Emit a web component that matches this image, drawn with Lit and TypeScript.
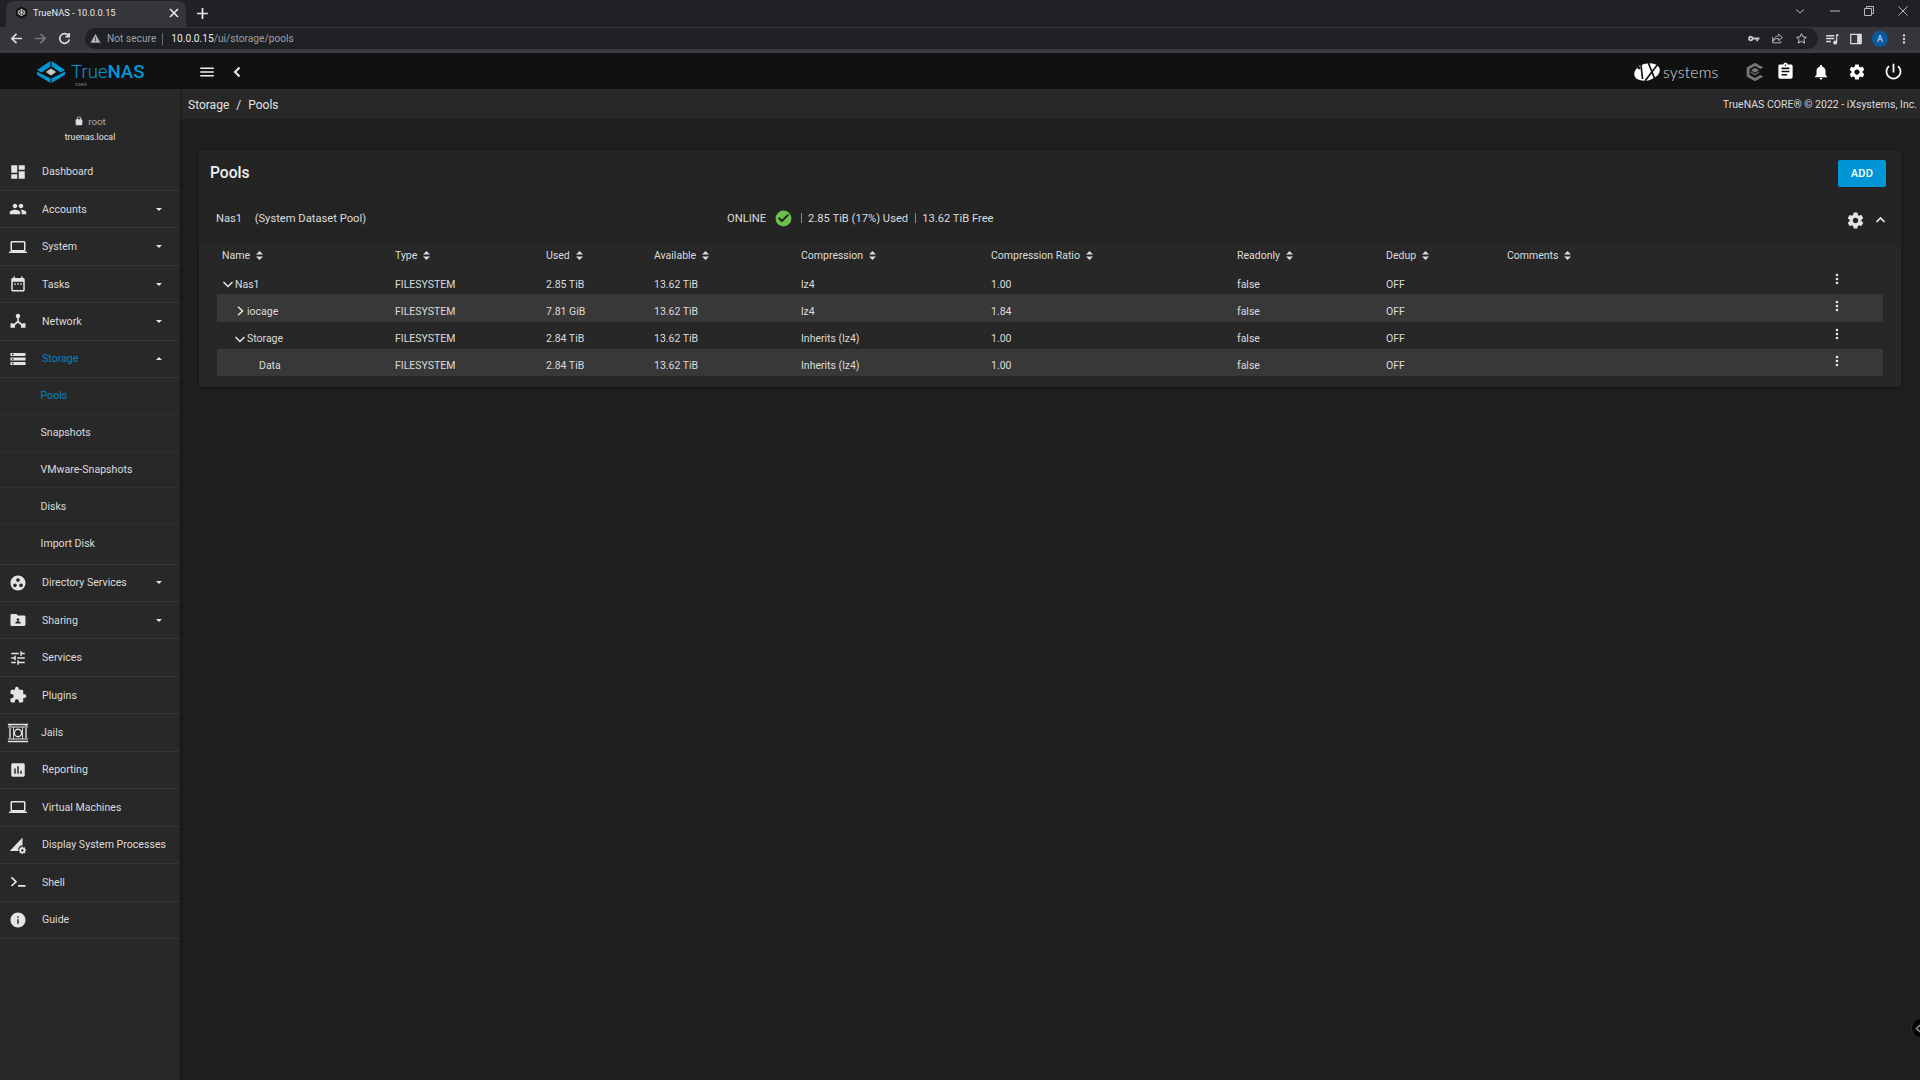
import { LitElement, html, css, svg } from "lit";
import { customElement } from "lit/decorators.js";

const P: Record<string, string> = {
  dashboard: "M3 13h8V3H3v10zm0 8h8v-6H3v6zm10 0h8V11h-8v10zm0-18v6h8V3h-8z",
  people: "M16 11c1.66 0 2.99-1.34 2.99-3S17.66 5 16 5c-1.66 0-3 1.34-3 3s1.34 3 3 3zm-8 0c1.66 0 2.99-1.34 2.99-3S9.66 5 8 5C6.34 5 5 6.34 5 8s1.34 3 3 3zm0 2c-2.33 0-7 1.17-7 3.5V19h14v-2.5c0-2.33-4.67-3.5-7-3.5zm8 0c-.29 0-.62.02-.97.05 1.16.84 1.97 1.97 1.97 3.45V19h6v-2.5c0-2.33-4.67-3.5-7-3.5z",
  laptop: "M20 18c1.1 0 1.99-.9 1.99-2L22 6c0-1.1-.9-2-2-2H4c-1.1 0-2 .9-2 2v10c0 1.1.9 2 2 2H0v2h24v-2h-4zM4 6h16v10H4V6z",
  calendar: "M9 11H7v2h2v-2zm4 0h-2v2h2v-2zm4 0h-2v2h2v-2zm2-7h-1V2h-2v2H8V2H6v2H5c-1.11 0-1.99.9-1.99 2L3 20c0 1.1.89 2 2 2h14c1.1 0 2-.9 2-2V6c0-1.1-.9-2-2-2zm0 16H5V9h14v11z",
  network: "M12 2.500a3 3 0 0 1 1 5.830V12l5 4.200V15h4v6h-6v-3.400l-4-3.300-4 3.300V21H2v-6h4v1.200L11 12V8.330A3 3 0 0 1 12 2.500z",
  storage: "M2 20h20v-4H2v4zm2-3h2v2H4v-2zM2 4v4h20V4H2zm4 3H4V5h2v2zm-4 7h20v-4H2v4zm2-3h2v2H4v-2z",
  group: "M12 2C6.48 2 2 6.48 2 12s4.48 10 10 10 10-4.48 10-10S17.52 2 12 2zM8 17.5c-1.38 0-2.5-1.12-2.5-2.5s1.12-2.5 2.5-2.5 2.5 1.12 2.5 2.5-1.12 2.5-2.5 2.5zM9.5 8c0-1.38 1.12-2.5 2.5-2.5s2.5 1.12 2.5 2.5-1.12 2.5-2.5 2.5S9.5 9.38 9.5 8zm6.5 9.5c-1.38 0-2.5-1.12-2.5-2.5s1.12-2.5 2.5-2.5 2.5 1.12 2.5 2.5-1.12 2.5-2.5 2.5z",
  sharing: "M20 6h-8l-2-2H4c-1.1 0-2 .9-2 2v12c0 1.1.9 2 2 2h16c1.1 0 2-.9 2-2V8c0-1.1-.9-2-2-2zM12 9.500c1 0 1.800.8 1.800 1.800s-.8 1.800-1.800 1.800-1.800-.8-1.800-1.800.8-1.800 1.800-1.800zm3.500 7h-7v-.9c0-1.200 2.300-1.800 3.500-1.800s3.500.6 3.500 1.800v.9z",
  tune: "M3 17v2h6v-2H3zM3 5v2h10V5H3zm10 16v-2h8v-2h-8v-2h-2v6h2zM7 9v2H3v2h4v2h2V9H7zm14 4v-2H11v2h10zm-6-4h2V7h4V5h-4V3h-2v6z",
  plugin: "M20.5 11H19V7c0-1.1-.9-2-2-2h-4V3.5C13 2.12 11.88 1 10.5 1S8 2.12 8 3.5V5H4c-1.1 0-1.99.9-1.99 2v3.8H3.5c1.49 0 2.7 1.21 2.7 2.7s-1.21 2.7-2.7 2.7H2V20c0 1.1.9 2 2 2h3.8v-1.5c0-1.49 1.21-2.7 2.7-2.7 1.49 0 2.7 1.21 2.7 2.7V22H17c1.1 0 2-.9 2-2v-4h1.5c1.38 0 2.5-1.12 2.5-2.5S21.88 11 20.5 11z",
  jail: "M1 2h22v1.500H1zM1 20.500h22V22H1zM1 5h22v1H1zM1 18h22v1H1zM2.500 3.500H4v15H2.500zM20 3.500h1.500v15H20zM6.500 6h1v12h-1zM16.500 6h1v12h-1zM12 7.200a4.800 4.800 0 1 1 0 9.600 4.800 4.800 0 0 1 0-9.600zm0 1.600a3.200 3.200 0 1 0 0 6.400 3.200 3.200 0 0 0 0-6.400z",
  report: "M19 3H5c-1.1 0-2 .9-2 2v14c0 1.1.9 2 2 2h14c1.1 0 2-.9 2-2V5c0-1.1-.9-2-2-2zM9 17H7v-7h2v7zm4 0h-2V7h2v10zm4 0h-2v-4h2v4z",
  process: "M1 20 18 2v10.200a6 6 0 0 0-5.600 7.800zM18.500 14l.3 1.300.8.4 1.200-.6 1 1-.6 1.200.4.8 1.300.3v1.400l-1.300.3-.4.8.6 1.200-1 1-1.200-.6-.8.4-.3 1.300h-1.400l-.3-1.300-.8-.4-1.200.6-1-1 .6-1.200-.4-.8-1.300-.3v-1.400l1.300-.3.4-.8-.6-1.200 1-1 1.200.6.8-.4.3-1.300zm-.7 3.600a1.600 1.600 0 1 0 0 3.200 1.600 1.600 0 0 0 0-3.200z",
  shell: "M2.500 6.500 4 5l7 6.500L4 18l-1.500-1.500L7.800 11.500zM12 16h10v2.200H12z",
  info: "M12 2C6.48 2 2 6.48 2 12s4.48 10 10 10 10-4.48 10-10S17.52 2 12 2zm1 15h-2v-6h2v6zm0-8h-2V7h2v2z",
  gear: "M19.43 12.98c.04-.32.07-.64.07-.98s-.03-.66-.07-.98l2.11-1.65c.19-.15.24-.42.12-.64l-2-3.46c-.12-.22-.39-.3-.61-.22l-2.49 1c-.52-.4-1.08-.73-1.69-.98l-.38-2.65C14.46 2.18 14.25 2 14 2h-4c-.25 0-.46.18-.49.42l-.38 2.65c-.61.25-1.17.59-1.69.98l-2.49-1c-.23-.09-.49 0-.61.22l-2 3.46c-.13.22-.07.49.12.64l2.11 1.65c-.04.32-.07.65-.07.98s.03.66.07.98l-2.11 1.65c-.19.15-.24.42-.12.64l2 3.46c.12.22.39.3.61.22l2.49-1c.52.4 1.08.73 1.69.98l.38 2.65c.03.24.24.42.49.42h4c.25 0 .46-.18.49-.42l.38-2.65c.61-.25 1.17-.59 1.69-.98l2.49 1c.23.09.49 0 .61-.22l2-3.46c.12-.22.07-.49-.12-.64l-2.11-1.65zM12 15.5c-1.93 0-3.5-1.57-3.5-3.5s1.57-3.5 3.5-3.5 3.5 1.57 3.5 3.5-1.57 3.5-3.5 3.5z",
  bell: "M12 22c1.1 0 2-.9 2-2h-4c0 1.1.89 2 2 2zm6-6v-5c0-3.07-1.64-5.64-4.5-6.32V4c0-.83-.67-1.5-1.5-1.5s-1.5.67-1.5 1.5v.68C7.63 5.36 6 7.92 6 11v5l-2 2v1h16v-1l-2-2z",
  clip: "M19 3h-4.18C14.4 1.84 13.3 1 12 1c-1.3 0-2.4.84-2.82 2H5c-1.1 0-2 .9-2 2v14c0 1.1.9 2 2 2h14c1.1 0 2-.9 2-2V5c0-1.1-.9-2-2-2zm-7 0c.55 0 1 .45 1 1s-.45 1-1 1-1-.45-1-1 .45-1 1-1zm2 14H7v-2h7v2zm3-4H7v-2h10v2zm0-4H7V7h10v2z",
  power: "M13 3h-2v10h2V3zm4.83 2.17l-1.42 1.42C17.99 7.86 19 9.81 19 12c0 3.87-3.13 7-7 7s-7-3.13-7-7c0-2.19 1.01-4.14 2.58-5.42L6.17 5.17C4.23 6.82 3 9.26 3 12c0 4.97 4.03 9 9 9s9-4.03 9-9c0-2.74-1.23-5.18-3.17-6.83z",
  menu: "M3 18h18v-2H3v2zm0-5h18v-2H3v2zm0-7v2h18V6H3z",
  lock: "M18 8h-1V6c0-2.76-2.24-5-5-5S7 3.24 7 6v2H6c-1.1 0-2 .9-2 2v10c0 1.1.9 2 2 2h12c1.1 0 2-.9 2-2V10c0-1.1-.9-2-2-2zM9 6c0-1.66 1.34-3 3-3s3 1.34 3 3v2H9V6z",
  check: "M12 2a10 10 0 1 0 0 20 10 10 0 0 0 0-20zm-2 15-5-5 1.800-1.800 3.200 3.200 7.200-7.200L19 8z",
  kebab: "M12 8a2 2 0 1 0 0-4 2 2 0 0 0 0 4zm0 2a2 2 0 1 0 0 4 2 2 0 0 0 0-4zm0 6a2 2 0 1 0 0 4 2 2 0 0 0 0-4z",
  tc: "M12 1 22 6.500l-3.500 2L12 4.800 5.500 8.500v7l6.500 3.700 6.500-3.700 3.500 2L12 23 2 17.500v-11zM12 7l5 3-5 3-5-3zM7 11.500l5 3 5-3v1.500l-5 3-5-3z",
};

const ic = (n: string, cls = "ic") =>
  html`<svg class=${cls} viewBox="0 0 24 24" fill-rule="evenodd"><path d=${P[n]}></path></svg>`;

const NAV: { label: string; icon: string; arrow?: "down" | "up"; active?: boolean; sub?: string[]; jail?: boolean }[] = [
  { label: "Dashboard", icon: "dashboard" },
  { label: "Accounts", icon: "people", arrow: "down" },
  { label: "System", icon: "laptop", arrow: "down" },
  { label: "Tasks", icon: "calendar", arrow: "down" },
  { label: "Network", icon: "network", arrow: "down" },
  { label: "Storage", icon: "storage", arrow: "up", active: true, sub: ["Pools", "Snapshots", "VMware-Snapshots", "Disks", "Import Disk"] },
  { label: "Directory Services", icon: "group", arrow: "down" },
  { label: "Sharing", icon: "sharing", arrow: "down" },
  { label: "Services", icon: "tune" },
  { label: "Plugins", icon: "plugin" },
  { label: "Jails", icon: "jail", jail: true },
  { label: "Reporting", icon: "report" },
  { label: "Virtual Machines", icon: "laptop" },
  { label: "Display System Processes", icon: "process" },
  { label: "Shell", icon: "shell" },
  { label: "Guide", icon: "info" },
];

const COLS = ["Name", "Type", "Used", "Available", "Compression", "Compression Ratio", "Readonly", "Dedup", "Comments"];

const ROWS: { name: string; level: number; exp: "down" | "right" | ""; vals: string[] }[] = [
  { name: "Nas1", level: 0, exp: "down", vals: ["FILESYSTEM", "2.85 TiB", "13.62 TiB", "lz4", "1.00", "false", "OFF", ""] },
  { name: "iocage", level: 1, exp: "right", vals: ["FILESYSTEM", "7.81 GiB", "13.62 TiB", "lz4", "1.84", "false", "OFF", ""] },
  { name: "Storage", level: 1, exp: "down", vals: ["FILESYSTEM", "2.84 TiB", "13.62 TiB", "Inherits (lz4)", "1.00", "false", "OFF", ""] },
  { name: "Data", level: 2, exp: "", vals: ["FILESYSTEM", "2.84 TiB", "13.62 TiB", "Inherits (lz4)", "1.00", "false", "OFF", ""] },
];

const sortIcon = svg`<path d="M3.500 0 7 3.600H0zM3.500 9 0 5.400h7z"></path>`;

@customElement("app-root")
export class AppRoot extends LitElement {
  static styles = css`
    :host { display: block; width: 1920px; height: 1080px; overflow: hidden; position: relative; background: #1e1e1e; font-family: Roboto, "Liberation Sans", sans-serif; color: #e3e3e3; }
    svg { display: block; fill: currentColor; flex: none; }

    .tabstrip { height: 27px; background: #202124; display: flex; align-items: flex-end; position: relative; }
    .tab { width: 180px; height: 26px; margin-left: 6px; background: #35363a; border-radius: 8px 8px 0 0; display: flex; align-items: center; padding: 0 7px 3px 9px; box-sizing: border-box; font-size: 9.3px; color: #e8eaed; }
    .tab .fav { width: 13px; height: 13px; margin-right: 5px; }
    .tab .t { flex: 1; }
    .tab .x { width: 10px; height: 10px; stroke: #e8eaed; fill: none; stroke-width: 1.6; }
    .plus { width: 13px; height: 13px; margin-left: 10px; margin-bottom: 7px; stroke: #e8eaed; fill: none; stroke-width: 1.6; }
    .winctl { margin-left: auto; display: flex; align-items: center; height: 22px; align-self: flex-start; color: #b5b7ba; }
    .winctl svg { width: 12px; height: 12px; fill: none; stroke: currentColor; stroke-width: 1; margin-right: 22px; }
    .winctl svg:first-child { margin-right: 23px; }
    .winctl svg:last-child { margin-right: 11px; }

    .toolbar { height: 26px; box-sizing: border-box; background: #35363a; border-bottom: 3px solid #3c3d41; display: flex; align-items: center; padding-left: 10px; }
    .nav-btn { width: 13px; height: 13px; margin-right: 11px; fill: none; stroke: #dadce0; stroke-width: 1.8; }
    .nav-btn.dim { stroke: #75777a; }
    .omni { margin-left: 3px; width: 1733px; height: 21px; background: #202124; border-radius: 11px; display: flex; align-items: center; padding: 0 10px 0 5px; box-sizing: border-box; font-size: 10.2px; color: #9aa0a6; }
    .omni .warn { width: 11px; height: 11px; margin-right: 6px; color: #aeb1b5; }
    .omni .sep { width: 1px; height: 12px; background: #6b6e72; margin: 0 8px 0 6px; }
    .omni .host { color: #e8eaed; }
    .omni .r { margin-left: auto; display: flex; align-items: center; color: #c5c7ca; }
    .omni .r svg { width: 13px; height: 13px; margin-left: 11px; }
    .tb-r { display: flex; align-items: center; margin-left: 7px; color: #dadce0; }
    .tb-r svg { width: 14px; height: 14px; margin-right: 10px; }
    .tb-r svg.side-ic { margin-right: 9px; }
    .avatar { width: 16px; height: 16px; border-radius: 50%; background: #0b57a0; color: #dfe8f2; font-size: 9px; display: flex; align-items: center; justify-content: center; margin-right: 9px; }

    .topbar { height: 36px; box-sizing: border-box; padding-top: 1px; background: #111; display: flex; align-items: center; }
    .brand { width: 180px; display: flex; align-items: flex-start; padding-left: 37px; box-sizing: border-box; height: 35px; margin-top: -1px; padding-top: 7px; }
    .brand svg { width: 28px; height: 22px; margin-right: 6px; }
    .wordmark { position: relative; color: #0095d5; font-family: Roboto, sans-serif; font-size: 18.6px; line-height: 22px; font-weight: 300; }
    .wordmark b { font-weight: 500; }
    .wordmark small { position: absolute; left: 4px; top: 21px; font-size: 4px; line-height: 5px; color: #888; letter-spacing: .5px; font-weight: 500; }
    .hb { width: 18px; height: 18px; margin-left: 18px; color: #eee; }
    .bk { width: 10px; height: 12px; margin-left: 16px; fill: none; stroke: #eee; stroke-width: 2; }
    .tr { margin-left: auto; display: flex; align-items: center; color: #fff; }
    .ix { display: flex; align-items: center; margin-right: 26px; }
    .ix svg { width: 26px; height: 20px; margin-right: 3px; }
    .ix span { font-family: Lato, sans-serif; font-weight: 300; font-size: 15.8px; letter-spacing: .2px; color: #ddd; line-height: 20px; }
    .tb-ic { width: 18px; height: 18px; margin-right: 18.5px; }
    .tb-ic.tc { width: 20px; height: 20px; color: #777; margin-right: 11px; }
    .tb-ic.clip { width: 19px; height: 19px; margin-right: 17px; }
    .tb-ic.gr { margin-right: 17px; }
    .tb-ic.pw { width: 21px; height: 21px; margin-right: 16px; }

    .main { display: flex; height: 991px; }
    .side { width: 180px; flex: none; background: #282828; box-shadow: 1px 0 3px rgba(0,0,0,.35); position: relative; z-index: 1; }
    .user { height: 64.5px; display: flex; flex-direction: column; align-items: center; padding-top: 26px; box-sizing: border-box; font-size: 8.8px; line-height: 14.5px; }
    .user .u { display: flex; align-items: center; color: #aaa; font-size: 9.8px; }
    .user .u svg { width: 10px; height: 10px; margin-right: 4px; margin-top: -2px; color: #ddd; }
    .item { height: 37.45px; box-sizing: border-box; border-bottom: 1px solid #343434; display: flex; align-items: center; padding: 0 18px 0 9px; font-size: 10.6px; color: #dcdcdc; white-space: nowrap; }
    .item .ic { width: 18px; height: 18px; margin-right: 15px; color: #e4e4e4; }
    .item .ic.jail { width: 22px; height: 22px; margin: 0 12px 0 -2px; }
    .item.on { color: #0084c4; }
    .arrow { margin-left: auto; width: 0; height: 0; border-left: 3.6px solid transparent; border-right: 3.6px solid transparent; border-top: 3.6px solid #e4e4e4; }
    .arrow.up { border-top: 0; border-bottom: 3.6px solid #e4e4e4; }
    .subs { padding-bottom: 2px; border-bottom: 1px solid #343434; }
    .sub { height: 36.7px; box-sizing: border-box; border-bottom: 1px solid #303030; display: flex; align-items: center; padding-left: 40.5px; font-size: 10.6px; color: #dcdcdc; }
    .sub:last-child { border-bottom: 0; }
    .sub.on { color: #0084c4; }

    .content { flex: 1; min-width: 0; }
    .crumb { height: 30px; background: #282828; display: flex; align-items: center; padding: 1px 3px 0 8px; box-sizing: border-box; font-size: 12px; color: #e3e3e3; }
    .crumb .s { margin: 0 7px 0 7px; }
    .crumb .c { margin-left: auto; font-size: 10.5px; color: #dcdcdc; }

    .card { margin: 31px 19px 0 19px; background: #242424; border-radius: 3px; box-shadow: 0 1px 3px rgba(0,0,0,.3); }
    .card-h { height: 47px; display: flex; align-items: center; justify-content: space-between; padding: 0 15px 0 11px; border-bottom: 1px solid #222; box-sizing: border-box; }
    .card-h h2 { margin: 0; font-size: 15.6px; font-weight: 500; color: #f0f0f0; }
    .add { width: 48px; height: 27px; background: #0095d5; color: #fff; border: 0; border-radius: 2px; font: 500 11px Roboto, sans-serif; letter-spacing: .2px; padding: 0; }
    .pool { height: 47px; display: grid; grid-template-columns: 511px auto 1fr auto auto; align-items: center; padding: 0 15px 0 17px; box-sizing: border-box; font-size: 11.2px; color: #dcdcdc; }
    .pool .nm span { margin-left: 12.5px; }
    .nm, .status { margin-bottom: 5px; }
    .status { display: flex; align-items: center; }
    .status .ok { width: 19px; height: 19px; margin: 0 1px 0 8px; color: #6cc04a; }
    .status .bar { width: 1px; height: 10px; background: #888; margin: 0 6.5px; }
    .pool .g { width: 19px; height: 19px; grid-column: 4; color: #e4e4e4; margin-right: 10px; }
    .pool .cv { width: 11px; height: 8px; fill: none; stroke: #eee; stroke-width: 1.6; grid-column: 5; margin-bottom: 2px; }

    .tbl { background: #272727; padding: 0 18px 12px 18px; height: 143px; box-sizing: border-box; }
    .row { display: grid; grid-template-columns: 173px 151px 108px 147px 190px 246px 149px 121px 322px 16px; align-items: center; height: 27.25px; box-sizing: border-box; padding: 4px 0 0 5px; font-size: 10.5px; color: #dcdcdc; }
    .row.head { height: 23px; padding-top: 0; }
    .row.alt { background: #383838; }
    .th { display: flex; align-items: center; }
    .th svg { width: 7px; height: 9px; margin-left: 6px; }
    .nm-cell { display: flex; align-items: center; }
    .exp { width: 13px; height: 10px; flex: none; fill: none; stroke: #e6e6e6; stroke-width: 1.5; }
    .kb { width: 16px; height: 16px; margin-bottom: 10px; color: #e4e4e4; }

    .peek { position: absolute; left: 1911px; top: 1017px; width: 22px; height: 22px; border-radius: 50%; background: #050505; border: 1px solid #26323a; box-sizing: border-box; display: flex; align-items: center; padding-left: 3px; }
    .peek svg { width: 6px; height: 9px; fill: none; stroke: #888; stroke-width: 1.6; }
  `;

  private chrome() {
    return html`
      <div class="tabstrip">
        <div class="tab">
          <svg class="fav" viewBox="0 0 24 24">
            <polygon points="12,1 22,6.500 22,17.500 12,23 2,17.500 2,6.500" fill="#0d0d0d"></polygon>
            <path d="M12 6l6 3.500v5L12 18l-6-3.500v-5zM12 6v12M6 9.500l12 5M18 9.500l-12 5" fill="none" stroke="#d5d5d5" stroke-width="1.600"></path>
          </svg>
          <span class="t">TrueNAS - 10.0.0.15</span>
          <svg class="x" viewBox="0 0 10 10"><path d="M1 1l8 8M9 1l-8 8"></path></svg>
        </div>
        <svg class="plus" viewBox="0 0 12 12"><path d="M6 1v10M1 6h10"></path></svg>
        <div class="winctl">
          <svg viewBox="0 0 12 12"><path d="M2 4.500 6 8l4-3.500"></path></svg>
          <svg viewBox="0 0 12 12"><path d="M1 6h10"></path></svg>
          <svg viewBox="0 0 12 12"><path d="M1.500 3.500h7v7h-7zM3.500 3.500v-2h7v7h-2"></path></svg>
          <svg viewBox="0 0 12 12"><path d="M1.500 1.500l9 9M10.500 1.500l-9 9"></path></svg>
        </div>
      </div>
      <div class="toolbar">
        <svg class="nav-btn" viewBox="0 0 14 14"><path d="M13 7H2M7 2 2 7l5 5"></path></svg>
        <svg class="nav-btn dim" viewBox="0 0 14 14"><path d="M1 7h11M7 2l5 5-5 5"></path></svg>
        <svg class="nav-btn" viewBox="0 0 14 14"><path d="M11.500 4.200A5.200 5.200 0 1 0 12.200 8M12 1v4H8"></path></svg>
        <div class="omni">
          <svg class="warn" viewBox="0 0 24 24" fill-rule="evenodd"><path d="M1 21h22L12 2 1 21zm12-3h-2v-2h2v2zm0-4h-2v-4h2v4z"></path></svg>
          <span>Not secure</span><span class="sep"></span><span><span class="host">10.0.0.15</span>/ui/storage/pools</span>
          <div class="r">
            <svg viewBox="0 0 24 24" fill-rule="evenodd"><path d="M7 7a5 5 0 0 1 4.700 3.300H23v3.400h-2.500V17h-3.400v-3.300h-5.400A5 5 0 1 1 7 7zm0 3.400a1.600 1.600 0 1 0 0 3.200 1.600 1.600 0 0 0 0-3.200z"></path></svg>
            <svg viewBox="0 0 24 24" style="fill:none;stroke:currentColor;stroke-width:1.6"><path d="M14 4l7 6-7 6v-4c-5 0-8 1.500-10 5 .5-5 3.500-9 10-10zM3 9v11h15v-3"></path></svg>
            <svg viewBox="0 0 24 24" style="fill:none;stroke:currentColor;stroke-width:1.8"><path d="M12 3l2.800 6 6.200.7-4.600 4.300 1.300 6.500L12 17.200 6.300 20.500 7.600 14 3 9.700 9.200 9z"></path></svg>
          </div>
        </div>
        <div class="tb-r">
          <svg viewBox="0 0 24 24"><path d="M2 5h14v2.500H2zM2 10h14v2.500H2zM2 15h8v2.500H2zM20 4h3v3h-2v11a3.500 3.500 0 1 1-2-3.100V4z"></path></svg>
          <svg class="side-ic" viewBox="0 0 24 24" fill-rule="evenodd"><path d="M2 3h20v18H2zM4 5v14h10V5z"></path></svg>
          <div class="avatar">A</div>
          <svg viewBox="0 0 24 24" style="margin:0"><path d=${P.kebab}></path></svg>
        </div>
      </div>`;
  }

  private topbar() {
    return html`
      <div class="topbar">
        <div class="brand">
          <svg viewBox="0 0 28 22">
            <g fill="#0095d5">
              <polygon points="13.400,0 0,9 4.500,11.500 13.400,5.400"></polygon>
              <polygon points="14.600,0 28,9 23.500,11.500 14.600,5.400"></polygon>
              <polygon points="0,10.500 5.500,13.400 13.400,17.300 13.400,22 0,13.800"></polygon>
              <polygon points="28,10.500 22.500,13.400 14.600,17.300 14.600,22 28,13.800"></polygon>
            </g>
            <polygon points="14,7.400 19.200,11 14,14.600 8.800,11" fill="#c8c8c8"></polygon>
          </svg>
          <div class="wordmark">True<b>NAS</b><small>CORE</small></div>
        </div>
        <svg class="hb" viewBox="0 0 24 24"><path d=${P.menu}></path></svg>
        <svg class="bk" viewBox="0 0 10 12"><path d="M7.500 1.500 3 6l4.500 4.500"></path></svg>
        <div class="tr">
          <div class="ix">
            <svg viewBox="0 0 26 20">
              <ellipse cx="13" cy="10" rx="13" ry="8.500" transform="rotate(-14 13 10)" fill="#fff"></ellipse>
              <path d="M7 3l1.500 14M14 0l8 20M24 2 11 19" stroke="#111" stroke-width="1.700" fill="none"></path>
              <circle cx="5" cy="6" r="1.400" fill="#111"></circle>
            </svg>
            <span>systems</span>
          </div>
          ${ic("tc", "tb-ic tc")}
          ${ic("clip", "tb-ic clip")}
          ${ic("bell", "tb-ic")}
          ${ic("gear", "tb-ic gr")}
          ${ic("power", "tb-ic pw")}
        </div>
      </div>`;
  }

  private sidebar() {
    return html`
      <aside class="side">
        <div class="user">
          <div class="u">${ic("lock", "")}root</div>
          <div>truenas.local</div>
        </div>
        ${NAV.map((n) => html`
          <div class="item ${n.active ? "on" : ""}">
            ${ic(n.icon, n.jail ? "ic jail" : "ic")}
            <span>${n.label}</span>
            ${n.arrow ? html`<span class="arrow ${n.arrow === "up" ? "up" : ""}"></span>` : ""}
          </div>
          ${n.sub ? html`<div class="subs">${n.sub.map((s, i) => html`<div class="sub ${i === 0 ? "on" : ""}">${s}</div>`)}</div>` : ""}
        `)}
      </aside>`;
  }

  private exp(d: string) {
    if (d === "down") return html`<svg class="exp" viewBox="0 0 13 10"><path d="M1.500 3 6 7.500 10.500 3"></path></svg>`;
    if (d === "right") return html`<svg class="exp" viewBox="0 0 13 10"><path d="M4 .8 8.500 5 4 9.200"></path></svg>`;
    return html`<span class="exp"></span>`;
  }

  private table() {
    return html`
      <div class="tbl">
        <div class="row head">
          ${COLS.map((c) => html`<div class="th">${c}<svg viewBox="0 0 7 9">${sortIcon}</svg></div>`)}
        </div>
        ${ROWS.map((r, i) => html`
          <div class="row ${i % 2 ? "alt" : ""}">
            <div class="nm-cell" style="padding-left:${r.level * 12}px">${this.exp(r.exp)}<span>${r.name}</span></div>
            ${r.vals.map((v) => html`<div>${v}</div>`)}
            ${ic("kebab", "kb")}
          </div>`)}
      </div>`;
  }

  render() {
    return html`
      ${this.chrome()}
      ${this.topbar()}
      <div class="main">
        ${this.sidebar()}
        <div class="content">
          <div class="crumb"><span>Storage</span><span class="s">/</span><span>Pools</span><span class="c">TrueNAS CORE® © 2022 - iXsystems, Inc.</span></div>
          <section class="card">
            <div class="card-h"><h2>Pools</h2><button class="add">ADD</button></div>
            <div class="pool">
              <div class="nm">Nas1<span>(System Dataset Pool)</span></div>
              <div class="status">ONLINE ${ic("check", "ok")}<span class="bar"></span>2.85 TiB (17%) Used<span class="bar"></span>13.62 TiB Free</div>
              ${ic("gear", "g")}
              <svg class="cv" viewBox="0 0 11 8"><path d="M1.500 6 5.500 2l4 4"></path></svg>
            </div>
            ${this.table()}
          </section>
        </div>
      </div>
      <div class="peek"><svg viewBox="0 0 6 9"><path d="M5 1 1.500 4.500 5 8"></path></svg></div>`;
  }
}
